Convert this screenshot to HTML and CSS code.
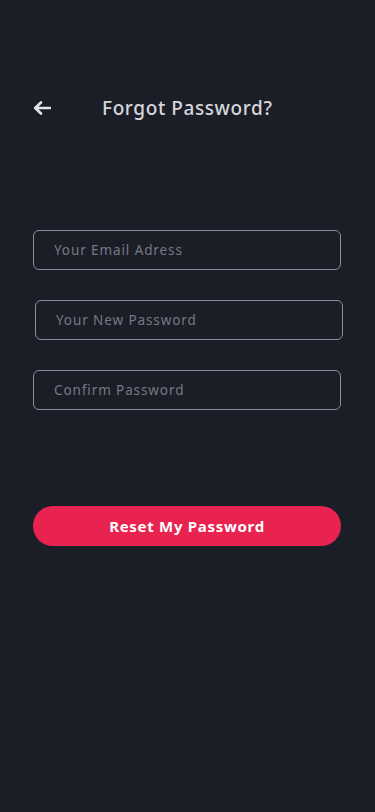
FILE: index.html
```html
<!DOCTYPE html>
<html lang="en">
<head>
    <meta charset="UTF-8">
    <meta name="viewport" content="width=device-width, initial-scale=1.0">
    <title>Forgot Password</title>
    <link rel="stylesheet" href="styles.css">
</head>
<body>
    <div class="screen">
        <div class="header">
            <button class="back" aria-label="Back">
                <svg width="18" height="14" viewBox="0 0 18 14">
                    <path d="M17 7H3M8 1.5L2.2 7L8 12.5" fill="none" stroke="#e4e4e8" stroke-width="2.6" stroke-linecap="round" stroke-linejoin="round"/>
                </svg>
            </button>
            <h1 class="title">Forgot Password?</h1>
        </div>

        <form class="form">
            <input type="email" class="field" placeholder="Your Email Adress">
            <input type="password" class="field shifted" placeholder="Your New Password">
            <input type="password" class="field" placeholder="Confirm Password">
            <button type="button" class="reset">Reset My Password</button>
        </form>
    </div>
</body>
</html>
```

FILE: styles.css
```css
html, body { margin: 0; padding: 0; background: #1b1e27; }
body { font-family: "Noto Sans", sans-serif; min-height: 812px; }
.screen { padding: 0 34px 0 33px; }
.header { display: flex; align-items: center; height: 36px; margin-top: 90px; }
.back { background: none; border: none; padding: 0; width: 18px; height: 14px; cursor: pointer; display: flex; }
.title { margin: 0 0 0 51px; font-size: 19px; font-weight: 500; color: #d6d6da; letter-spacing: 0.6px; }
.form { display: flex; flex-direction: column; margin-top: 104px; }
.field { box-sizing: border-box; width: 308px; height: 40px; margin-bottom: 30px; padding: 0 20px; background: transparent; border: 1px solid #8b8d9e; border-radius: 6px; font-family: inherit; font-size: 13.5px; letter-spacing: 0.9px; color: #d6d6da; outline: none; }
.field::placeholder { color: #777986; }
.shifted { margin-left: 2px; }
.reset { width: 308px; height: 40px; margin-top: 66px; border: none; border-radius: 20px; background: #e8234f; color: #fff; font-family: inherit; font-size: 15px; font-weight: 700; letter-spacing: 0.7px; cursor: pointer; }
```
